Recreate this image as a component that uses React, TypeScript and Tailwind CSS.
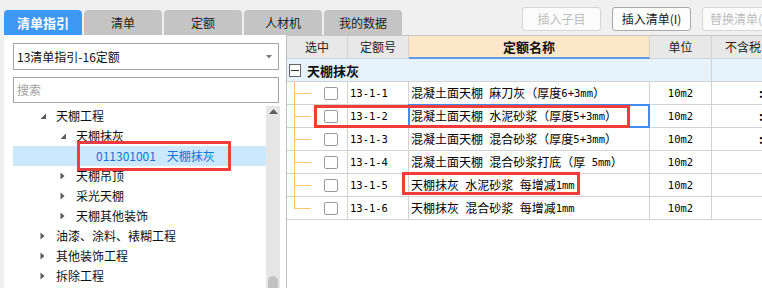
import React from "react";

const rows = [
  { code: "13-1-1", name: "混凝土面天棚 麻刀灰（厚度6+3mm）", dot: true },
  { code: "13-1-2", name: "混凝土面天棚 水泥砂浆（厚度5+3mm）", dot: true, focus: true },
  { code: "13-1-3", name: "混凝土面天棚 混合砂浆（厚度5+3mm）", dot: true },
  { code: "13-1-4", name: "混凝土面天棚 混合砂浆打底（厚 5mm）" },
  { code: "13-1-5", name: "天棚抹灰 水泥砂浆 每增减1mm" },
  { code: "13-1-6", name: "天棚抹灰 混合砂浆 每增减1mm", last: true },
];

function Mixed({ text }: { text: string }) {
  const parts = text.match(/[\x20-\x7e]+|[^\x20-\x7e]+/g) || [];
  return (
    <>
      {parts.map((p, i) =>
        /^[\x20-\x7e]+$/.test(p) ? (
          <span key={i} className="font-['DejaVu_Sans_Mono',monospace] text-[10.5px] whitespace-pre">{p}</span>
        ) : (
          <span key={i}>{p}</span>
        )
      )}
    </>
  );
}

function Expanded() {
  return (
    <svg width="7" height="7" viewBox="0 0 7 7" className="shrink-0">
      <polygon points="6,0.5 6,6 0.5,6" fill="#5a5a5a" />
    </svg>
  );
}
function Collapsed() {
  return (
    <svg width="5" height="8" viewBox="0 0 5 8" className="shrink-0">
      <polygon points="0.5,0.5 4.5,4 0.5,7.5" fill="#5a5a5a" />
    </svg>
  );
}

function TreeRow({ level, icon, children, selected }: { level: number; icon?: "e" | "c"; children: React.ReactNode; selected?: boolean }) {
  const iconPad = level === 0 ? "pl-[27px]" : "pl-[47px]";
  return (
    <div className={`h-[20px] flex items-center ${selected ? "bg-[#cce8fc]" : ""}`}>
      {icon ? (
        <div className={`flex items-center ${iconPad}`}>
          <div className="w-[16px] flex items-center">{icon === "e" ? <Expanded /> : <Collapsed />}</div>
          <span className="leading-[20px]">{children}</span>
        </div>
      ) : (
        <div className="pl-[83px] leading-[20px]">{children}</div>
      )}
    </div>
  );
}

export default function App() {
  return (
    <div className="w-[762px] h-[288px] bg-[#f0f0f0] overflow-hidden flex flex-col font-['Noto_Sans_CJK_SC',sans-serif] text-[12px] text-[#111] relative">
      {/* top bar */}
      <div className="h-[35px] flex items-end pl-[4px] shrink-0">
        <div className="w-[78px] h-[25px] mr-[2px] shrink-0 rounded-t-[4px] bg-[#3d98f6] text-white font-bold text-[13px] flex items-center justify-center leading-none">清单指引</div>
        {["清单", "定额", "人材机", "我的数据"].map((t) => (
          <div key={t} className="w-[78px] h-[25px] mr-[2px] shrink-0 rounded-t-[4px] bg-[#c4c4c4] text-[#222] flex items-center justify-center leading-none">{t}</div>
        ))}
        <div className="self-start mt-[7px] ml-[118px] flex gap-[11px] shrink-0">
          <div className="w-[79px] h-[24px] rounded-[3px] border border-[#d6d6d6] bg-[#fbfbfb] text-[#bdbdbd] flex items-center justify-center leading-none shrink-0">插入子目</div>
          <div className="w-[79px] h-[24px] rounded-[3px] border border-[#a9a9a9] bg-[#fdfdfd] text-[#1a1a1a] flex items-center justify-center leading-none shrink-0">插入清单(I)</div>
          <div className="w-[79px] h-[24px] rounded-[3px] border border-[#d6d6d6] bg-[#fbfbfb] text-[#bdbdbd] flex items-center justify-start pl-[7px] leading-none shrink-0 whitespace-nowrap">替换清单(R)</div>
        </div>
      </div>

      {/* main */}
      <div className="flex flex-1 min-h-0">
        {/* left panel */}
        <div className="ml-[4px] w-[283px] bg-white border-r border-[#bdbdbd] flex flex-col shrink-0">
          <div className="ml-[9px] mt-[8px] w-[266px] h-[27px] border border-[#a5a5a5] flex items-center pl-[3px] pr-[6px]">
            <span className="flex-1 leading-none text-[#111]">13清单指引-16定额</span>
            <svg width="6" height="4" viewBox="0 0 6 4"><polygon points="0,0 6,0 3,3.5" fill="#7a7a7a" /></svg>
          </div>
          <div className="ml-[9px] mt-[7px] w-[266px] h-[26px] border border-[#a5a5a5] flex items-center pl-[3px]">
            <span className="leading-none text-[#a0a0a0]">搜索</span>
          </div>
          <div className="ml-[9px] mt-[3px] flex flex-1 min-h-0">
            <div className="w-[253px] text-[#111]">
              <TreeRow level={0} icon="e">天棚工程</TreeRow>
              <TreeRow level={1} icon="e">天棚抹灰</TreeRow>
              <TreeRow level={2} selected>
                <span className="text-[#1b6fd8]">011301001&nbsp;&nbsp;&nbsp;&nbsp;天棚抹灰</span>
              </TreeRow>
              <TreeRow level={1} icon="c">天棚吊顶</TreeRow>
              <TreeRow level={1} icon="c">采光天棚</TreeRow>
              <TreeRow level={1} icon="c">天棚其他装饰</TreeRow>
              <TreeRow level={0} icon="c">油漆、涂料、裱糊工程</TreeRow>
              <TreeRow level={0} icon="c">其他装饰工程</TreeRow>
              <TreeRow level={0} icon="c">拆除工程</TreeRow>
            </div>
            <div className="w-[14px] bg-[#e6e6e6] flex flex-col items-center justify-between">
              <svg width="9" height="5" viewBox="0 0 9 5" className="mt-[3px]"><polygon points="0,5 9,5 4.5,0" fill="#5e5e66" /></svg>
              <div className="w-[10px] h-[12px] rounded-t-[5px] bg-[#c2c2c2]" />
            </div>
          </div>
        </div>

        {/* right table */}
        <div className="flex-1 bg-white border-t border-[#c6c6c6] min-w-0 overflow-hidden">
          {/* header */}
          <div className="flex h-[23px] text-[#222]">
            <div className="w-[61px] shrink-0 bg-[#e8e8e8] border-r border-b border-[#d2d2d2] flex items-center justify-center leading-none">选中</div>
            <div className="w-[61px] shrink-0 bg-[#e8e8e8] border-r border-b border-[#d2d2d2] flex items-center justify-center leading-none">定额号</div>
            <div className="w-[241px] shrink-0 bg-[#fde7c9] border-r border-[#d2d2d2] border-b-2 border-b-[#5b9be6] flex items-center justify-center leading-none font-bold text-[13px] text-[#111]">定额名称</div>
            <div className="w-[62px] shrink-0 bg-[#e8e8e8] border-r border-b border-[#d2d2d2] flex items-center justify-center leading-none">单位</div>
            <div className="w-[120px] shrink-0 bg-[#e8e8e8] border-b border-[#d2d2d2] flex items-center pl-[13px] leading-none whitespace-nowrap">不含税单价</div>
          </div>
          {/* group row */}
          <div className="flex h-[23px] bg-[#e6f3fd]">
            <div className="w-[425px] shrink-0 border-r border-b border-[#d2d2d2] flex items-center pl-[2px]">
              <div className="w-[12px] h-[13px] border border-[#666] bg-white flex items-center justify-center">
                <div className="w-[8px] h-[1px] bg-[#333]" />
              </div>
              <span className="ml-[6px] font-bold text-[13px] leading-none text-[#111]">天棚抹灰</span>
            </div>
            <div className="w-[120px] shrink-0 border-b border-[#d2d2d2]" />
          </div>
          {/* data rows */}
          {rows.map((r) => (
            <div key={r.code} className="flex h-[23px] text-black">
              <div className="w-[61px] shrink-0 border-r border-b border-[#d2d2d2] relative">
                <div className={`absolute left-[7px] top-0 w-[1px] bg-[#fcc46b] ${r.last ? "h-[12px]" : "-bottom-[1px]"}`} />
                <div className="absolute left-[7px] top-[11px] w-[17px] h-[1px] bg-[#fcc46b]" />
                <div className="absolute left-[37px] top-[5px] w-[14px] h-[13px] rounded-[2px] border border-[#9a9a9a] bg-white" />
              </div>
              <div className="w-[61px] shrink-0 border-r border-b border-[#d2d2d2] flex items-center pl-[2px] leading-none"><Mixed text={r.code} /></div>
              <div className="w-[241px] shrink-0 border-r border-b border-[#d2d2d2] flex items-center pl-[2px] leading-none whitespace-nowrap relative">
                <Mixed text={r.name} />
                {r.focus && <div className="absolute -left-[1px] -top-[1px] -right-[1px] -bottom-[1px] border-2 border-[#3d8ef0]" />}
              </div>
              <div className="w-[62px] shrink-0 border-r border-b border-[#d2d2d2] flex items-center justify-center leading-none"><Mixed text="10m2" /></div>
              <div className="w-[120px] shrink-0 border-b border-[#d2d2d2] flex items-center leading-none">
                <span className="ml-[47px] font-bold">{r.dot ? ":" : ""}</span>
              </div>
            </div>
          ))}
        </div>
      </div>

      {/* annotation boxes */}
      <div className="absolute left-[77px] top-[141px] w-[154px] h-[30px] border-[3px] border-[#f23c3c]" />
      <div className="absolute left-[314px] top-[105px] w-[316px] h-[23px] border-[3px] border-[#f23c3c]" />
      <div className="absolute left-[402px] top-[172px] w-[178px] h-[23px] border-[3px] border-[#f23c3c]" />
    </div>
  );
}
